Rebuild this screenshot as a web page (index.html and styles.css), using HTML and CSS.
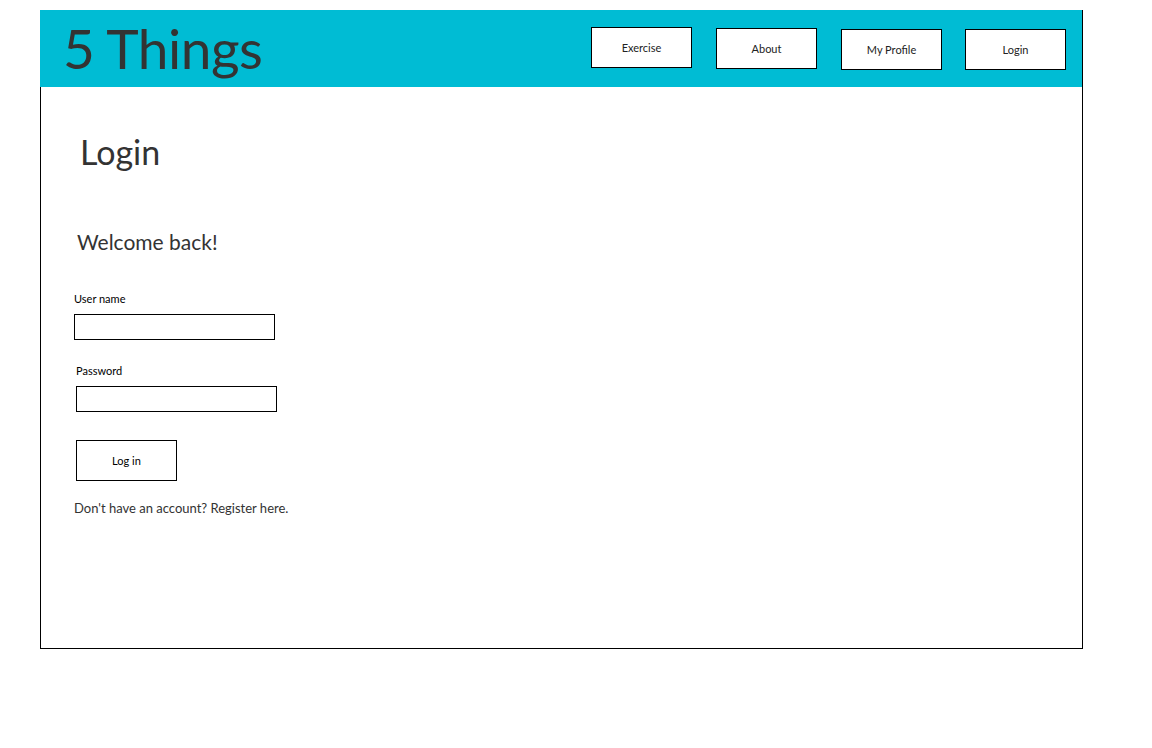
FILE: index.html
```html
<!DOCTYPE html>
<html lang="en">
<head>
<meta charset="utf-8">
<title>5 Things - Login</title>
<link rel="stylesheet" href="styles.css">
</head>
<body>
<div class="frame">
  <header class="header">
    <div class="brand">5 Things</div>
    <nav class="nav">
      <a class="nav-btn nav-1">Exercise</a>
      <a class="nav-btn nav-2">About</a>
      <a class="nav-btn nav-3">My Profile</a>
      <a class="nav-btn nav-4">Login</a>
    </nav>
  </header>
  <main class="main">
    <h1 class="title">Login</h1>
    <h2 class="welcome">Welcome back!</h2>
    <form class="form">
      <label class="label">User name</label>
      <input class="field" type="text">
      <label class="label label-2">Password</label>
      <input class="field field-2" type="password">
      <button class="submit" type="button">Log in</button>
    </form>
    <p class="register">Don't have an account? Register here.</p>
  </main>
</div>
</body>
</html>
```

FILE: styles.css
```css
* { box-sizing: border-box; }
html, body { margin: 0; padding: 0; background: #fff; }
body {
  font-family: "Source Sans Pro", "Lato", sans-serif;
  color: #333;
}
.frame {
  width: 1043px;
  margin: 10px 0 0 40px;
  border-right: 1px solid #000;
  border-bottom: 1px solid #000;
}
.header {
  height: 77px;
  background: #00bcd4;
  display: flex;
  align-items: flex-start;
  padding: 0 16px 0 23px;
}
.brand {
  font-size: 55px;
  line-height: 77px;
  color: #333;
  letter-spacing: -0.5px;
}
.nav {
  display: flex;
  padding-top: 17px;
  margin-left: auto;
}
.nav-btn {
  width: 101px;
  height: 41px;
  background: #fff;
  border: 1px solid #000;
  display: flex;
  align-items: center;
  justify-content: center;
  font-size: 11px;
  color: #222;
}
.nav-2 { margin: 1px 0 0 24px; }
.nav-3 { margin: 2px 0 0 24px; }
.nav-4 { margin: 2px 0 0 23px; }
.main {
  height: 561px;
  border-left: 1px solid #000;
  padding: 0 0 0 33px;
}
.title {
  margin: 0;
  padding: 43px 0 0 6px;
  font-size: 34px;
  font-weight: 400;
  line-height: 44px;
  color: #333;
}
.welcome {
  margin: 0;
  padding: 55px 0 0 3px;
  font-size: 21px;
  font-weight: 400;
  line-height: 26px;
  color: #333;
}
.form {
  display: flex;
  flex-direction: column;
  align-items: flex-start;
  padding-top: 37px;
}
.label {
  font-size: 11px;
  line-height: 14px;
  color: #000;
}
.label-2 { margin-left: 2px; margin-top: 24px; }
.field {
  width: 201px;
  height: 26px;
  margin-top: 8px;
  border: 1px solid #000;
  background: #fff;
  padding: 0;
}
.field-2 { margin-left: 2px; }
.submit {
  width: 101px;
  height: 41px;
  margin: 28px 0 0 2px;
  border: 1px solid #000;
  background: #fff;
  font-family: inherit;
  font-size: 11px;
  color: #000;
  padding: 0;
}
.register {
  margin: 19px 0 0 0;
  font-size: 13px;
  line-height: 16px;
  color: #333;
}
```
